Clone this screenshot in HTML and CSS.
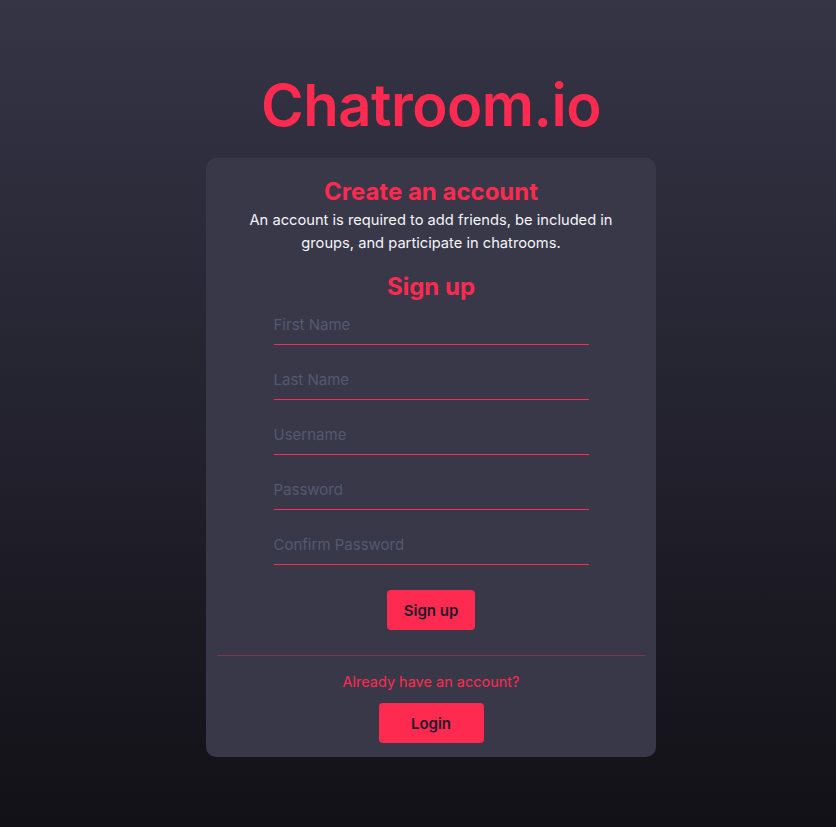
FILE: index.html
```html
<!DOCTYPE html>
<html lang="en">
<head>
<meta charset="utf-8">
<title>Chatroom.io</title>
<link rel="stylesheet" href="styles.css">
</head>
<body>
<main class="page">
  <h1 class="brand">Chatroom.io</h1>
  <section class="card">
    <h2 class="card-title">Create an account</h2>
    <p class="card-text">An account is required to add friends, be included in groups, and participate in chatrooms.</p>
    <h2 class="form-title">Sign up</h2>
    <form class="form">
      <input class="field" type="text" placeholder="First Name">
      <input class="field" type="text" placeholder="Last Name">
      <input class="field" type="text" placeholder="Username">
      <input class="field" type="password" placeholder="Password">
      <input class="field" type="password" placeholder="Confirm Password">
      <button class="btn btn-signup" type="button">Sign up</button>
    </form>
    <hr class="divider">
    <p class="already">Already have an account?</p>
    <button class="btn btn-login" type="button">Login</button>
  </section>
</main>
</body>
</html>
```
FILE: styles.css
```css
html, body {
  margin: 0;
  padding: 0;
}
body {
  min-height: 827px;
  background: linear-gradient(180deg, #363546 0%, #252431 45%, #121117 100%);
  font-family: "Inter", "DejaVu Sans", sans-serif;
  color: #ffffff;
}
.page {
  display: flex;
  flex-direction: column;
  align-items: center;
  padding-top: 69px;
  padding-left: 26px;
}
.brand {
  margin: 0 0 17px;
  font-size: 58px;
  line-height: 72px;
  font-weight: 600;
  color: #ff2a4f;
  letter-spacing: -0.5px;
}
.card {
  width: 450px;
  box-sizing: border-box;
  padding: 19px 11px 14px;
  background: #393849;
  border-radius: 10px;
  display: flex;
  flex-direction: column;
  align-items: center;
}
.card-title, .form-title {
  margin: 0;
  font-size: 24px;
  line-height: 30px;
  font-weight: 700;
  color: #ff2a4f;
}
.card-text {
  margin: 2px 0 0;
  width: 380px;
  text-align: center;
  font-size: 14.7px;
  line-height: 23px;
  color: #f4f4f8;
}
.form-title {
  margin-top: 17px;
}
.form {
  margin-top: 3px;
  width: 315px;
  display: flex;
  flex-direction: column;
  align-items: center;
  gap: 15px;
}
.field {
  width: 100%;
  box-sizing: border-box;
  height: 40px;
  padding: 0;
  border: 0;
  border-bottom: 1px solid #ff2a4f;
  background: transparent;
  font-family: inherit;
  font-size: 15px;
  color: #ffffff;
  outline: none;
}
.field::placeholder {
  color: #535a6f;
}
.btn {
  height: 40px;
  border: 0;
  border-radius: 4px;
  background: #ff2a4f;
  color: #1e1c2b;
  font-family: inherit;
  font-size: 15px;
  font-weight: 600;
  padding: 0;
}
.btn-signup {
  margin-top: 10px;
  width: 88px;
}
.divider {
  align-self: stretch;
  margin: 25px 0 0;
  border: 0;
  height: 1px;
  background: #823349;
}
.already {
  margin: 16px 0 0;
  font-size: 14.5px;
  line-height: 20px;
  color: #ff2a4f;
}
.btn-login {
  margin-top: 11px;
  width: 105px;
}
```
